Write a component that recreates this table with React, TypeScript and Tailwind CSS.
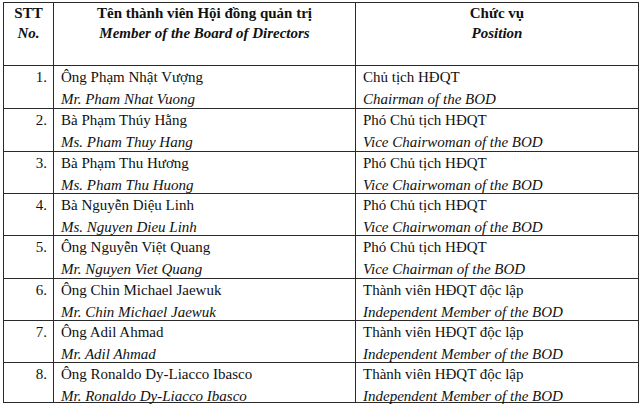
import React from "react";

const rows: [string, string, string, string, string, number][] = [
  ["1.", "Ông Phạm Nhật Vượng", "Mr. Pham Nhat Vuong", "Chủ tịch HĐQT", "Chairman of the BOD", 43],
  ["2.", "Bà Phạm Thúy Hằng", "Ms. Pham Thuy Hang", "Phó Chủ tịch HĐQT", "Vice Chairwoman of the BOD", 43],
  ["3.", "Bà Phạm Thu Hương", "Ms. Pham Thu Huong", "Phó Chủ tịch HĐQT", "Vice Chairwoman of the BOD", 42],
  ["4.", "Bà Nguyễn Diệu Linh", "Ms. Nguyen Dieu Linh", "Phó Chủ tịch HĐQT", "Vice Chairwoman of the BOD", 42],
  ["5.", "Ông Nguyễn Việt Quang", "Mr. Nguyen Viet Quang", "Phó Chủ tịch HĐQT", "Vice Chairman of the BOD", 43],
  ["6.", "Ông Chin Michael Jaewuk", "Mr. Chin Michael Jaewuk", "Thành viên HĐQT độc lập", "Independent Member of the BOD", 42],
  ["7.", "Ông Adil Ahmad", "Mr. Adil Ahmad", "Thành viên HĐQT độc lập", "Independent Member of the BOD", 42],
  ["8.", "Ông Ronaldo Dy-Liacco Ibasco", "Mr. Ronaldo Dy-Liacco Ibasco", "Thành viên HĐQT độc lập", "Independent Member of the BOD", 40],
];

const cell = "border border-[#2a2a2a] align-top p-0";

export default function App() {
  return (
    <div className="w-[640px] h-[407px] bg-white overflow-hidden pt-[2px] pl-[3px] text-[#111]" style={{ fontFamily: '"Liberation Serif", "Times New Roman", serif' }}>
      <table className="border-collapse table-fixed w-[635px] text-[15px]">
        <colgroup>
          <col className="w-[50px]" />
          <col className="w-[302px]" />
          <col className="w-[283px]" />
        </colgroup>
        <thead>
          <tr>
            <th className={`${cell} text-center font-bold`}>
              <div className="h-[62px] leading-[20px]">
                <div>STT</div>
                <div className="italic">No.</div>
              </div>
            </th>
            <th className={`${cell} text-center font-bold`}>
              <div className="h-[62px] leading-[20px]">
                <div>Tên thành viên Hội đồng quản trị</div>
                <div className="italic">Member of the Board of Directors</div>
              </div>
            </th>
            <th className={`${cell} text-center font-bold`}>
              <div className="h-[62px] leading-[20px]">
                <div>Chức vụ</div>
                <div className="italic">Position</div>
              </div>
            </th>
          </tr>
        </thead>
        <tbody>
          {rows.map((r) => (
            <tr key={r[0]}>
              <td className={`${cell} text-right pr-[6px]`}>
                <div className="leading-[22px]" style={{ height: r[5] - 1 }}>{r[0]}</div>
              </td>
              <td className={`${cell} pl-[7px]`}>
                <div className="leading-[22px]" style={{ height: r[5] - 1 }}>
                  <div>{r[1]}</div>
                  <div className="italic">{r[2]}</div>
                </div>
              </td>
              <td className={`${cell} pl-[7px]`}>
                <div className="leading-[22px]" style={{ height: r[5] - 1 }}>
                  <div>{r[3]}</div>
                  <div className="italic">{r[4]}</div>
                </div>
              </td>
            </tr>
          ))}
        </tbody>
      </table>
    </div>
  );
}
